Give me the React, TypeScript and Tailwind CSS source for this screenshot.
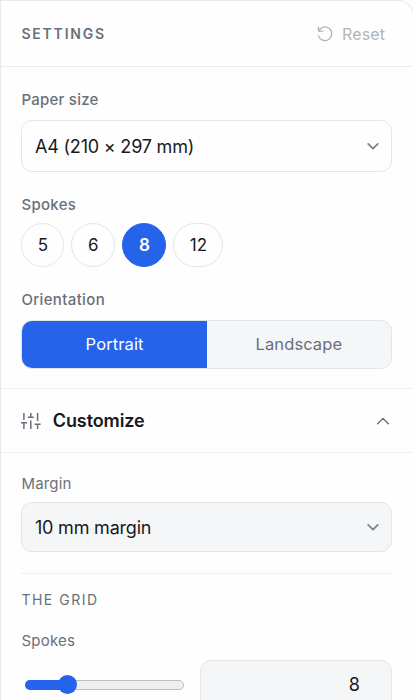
import React, { useState } from 'react';

const SPOKE_PRESETS = [
  { value: 5, width: 'w-[43px]' },
  { value: 6, width: 'w-[44px]' },
  { value: 8, width: 'w-[44px]' },
  { value: 12, width: 'w-[50px]' },
];
const MIN_SPOKES = 3;
const MAX_SPOKES = 24;

interface SelectBoxProps {
  value: string;
  className: string;
}

const SelectBox: React.FC<SelectBoxProps> = ({ value, className }) => (
  <button
    className={`flex w-full items-center justify-between rounded-[11px] border border-[#e4e5e7] pl-[12.6px] pr-[12.5px] text-[18px] text-[#18191b] ${className}`}
  >
    <span className="tracking-[-0.2px]">{value}</span>
    <svg className="h-3 w-3" viewBox="0 0 12 12" fill="none" stroke="#7e828a" strokeWidth={1.8}>
      <path strokeLinecap="round" strokeLinejoin="round" d="M1.2 3.9 6 8.6l4.8-4.7" />
    </svg>
  </button>
);

interface LabelProps {
  children: React.ReactNode;
  className?: string;
}

const Label: React.FC<LabelProps> = ({ children, className = '' }) => (
  <div className={`h-5 text-[15px] leading-5 text-[#6a707a] ${className}`}>{children}</div>
);

export default function App() {
  const [spokes, setSpokes] = useState(8);
  const [orientation, setOrientation] = useState('Portrait');
  const [open, setOpen] = useState(true);

  const percent = ((spokes - MIN_SPOKES) / (MAX_SPOKES - MIN_SPOKES)) * 100;

  return (
    <div className="h-[700px] w-full overflow-hidden bg-[#fcfcfc] font-['Inter',sans-serif]">
      <div className="h-[720px] w-[414px] rounded-tr-[16px] border-l border-r border-t border-[#e9e9eb] bg-[#fefefe]">
        <header className="flex h-[66px] items-center justify-between border-b border-[#ececee] pl-[20.4px] pr-7">
          <h2 className="text-[14px] font-semibold tracking-[1.8px] text-[#6a707a]">SETTINGS</h2>
          <button className="flex items-center gap-2 text-[16px] tracking-[0.1px] text-[#b3b5ba]">
            <svg className="h-[18px] w-[18px]" viewBox="0 0 18 18" fill="none" stroke="currentColor" strokeWidth={1.3}>
              <path strokeLinecap="round" strokeLinejoin="round" d="M2.5 1.8v4.4h4.4M2.7 6a6.8 6.8 0 1 1-.3 4.6" />
            </svg>
            <span>Reset</span>
          </button>
        </header>

        <section className="h-[322px] border-b border-[#f0f0f1] pl-[20.4px] pr-[21px] pt-[23px]">
          <Label className="font-medium tracking-[0.25px]">Paper size</Label>
          <SelectBox value="A4 (210 × 297 mm)" className="mt-[10px] h-[52px]" />

          <Label className="mt-[23px] font-medium tracking-[0.3px]">Spokes</Label>
          <div className="mt-2 flex gap-[7px]">
            {SPOKE_PRESETS.map((preset) => (
              <button
                key={preset.value}
                onClick={() => setSpokes(preset.value)}
                className={`h-11 rounded-full border pt-px text-[17px] ${preset.width} ${
                  spokes === preset.value
                    ? 'border-[#2563eb] bg-[#2563eb] font-semibold text-white'
                    : 'border-[#e4e5e7] text-[#18191b]'
                }`}
              >
                {preset.value}
              </button>
            ))}
          </div>

          <Label className="mt-[23px] font-medium tracking-[0.35px]">Orientation</Label>
          <div className="mt-[10px] flex h-[49px] overflow-hidden rounded-[11px] border border-[#e2e4e8] bg-[#f5f6f8]">
            {['Portrait', 'Landscape'].map((name) => (
              <button
                key={name}
                onClick={() => setOrientation(name)}
                className={`flex-1 text-[16.5px] tracking-[0.1px] ${
                  orientation === name ? 'bg-[#2563eb] text-white' : 'text-[#6a707a]'
                }`}
              >
                {name}
              </button>
            ))}
          </div>
        </section>

        <button
          onClick={() => setOpen(!open)}
          className="flex h-16 w-full items-center border-b border-[#f0f0f1] pl-[20.4px] pr-[24.5px]"
        >
          <svg className="h-5 w-5" viewBox="0 0 20 20" fill="none" stroke="#6a707a" strokeWidth={1.5}>
            <path d="M2.9 2v7M2.9 11.8V18M0 11.8h6M9.8 2v4.3M6.8 6.3h6M9.8 9.5V18M16.6 2v8M16.6 13.3V18M13.6 13.3h6" />
          </svg>
          <span className="ml-[11.4px] text-[18px] font-semibold tracking-[-0.1px] text-[#18191b]">Customize</span>
          <svg className="ml-auto h-3 w-3" viewBox="0 0 12 12" fill="none" stroke="#62656b" strokeWidth={1.3}>
            <path strokeLinecap="round" strokeLinejoin="round" d="M.6 8.8 6 3.4l5.4 5.4" />
          </svg>
        </button>

        {open && (
          <section className="pl-[20.4px] pr-[21px] pt-[21px]">
            <Label className="tracking-[0.2px]">Margin</Label>
            <SelectBox value="10 mm margin" className="mt-[8px] h-[50px] bg-[#f5f6f8]" />

            <div className="mt-[21px] border-t border-[#f0f0f1] pt-4">
              <h3 className="h-5 text-[14px] leading-5 tracking-[1.5px] text-[#6a707a]">THE GRID</h3>
              <Label className="mt-[21px] tracking-[0.25px]">Spokes</Label>

              <div className="mt-[9px] flex h-[50px] items-center gap-4">
                <div className="relative ml-[3.6px] h-[10px] w-[159px] rounded-full border border-[#bfbfbf] bg-[#efefef]">
                  <div
                    className="absolute -left-px -top-px h-[10px] rounded-full bg-[#2563eb]"
                    style={{ width: `${percent + 7}%` }}
                  />
                  <div
                    className="absolute -top-[6px] h-[19px] w-[19px] rounded-full bg-[#2563eb]"
                    style={{ left: `${percent * 0.86}%` }}
                  />
                  <input
                    type="range"
                    min={MIN_SPOKES}
                    max={MAX_SPOKES}
                    value={spokes}
                    onChange={(e) => setSpokes(Number(e.target.value))}
                    className="absolute inset-0 w-full opacity-0"
                  />
                </div>
                <div className="h-full flex-1 rounded-[11px] border border-[#e4e5e7] bg-[#f5f6f8] pr-[31px] text-right text-[18px] leading-[48px] text-[#18191b]">
                  {spokes}
                </div>
              </div>
            </div>
          </section>
        )}
      </div>
    </div>
  );
}
